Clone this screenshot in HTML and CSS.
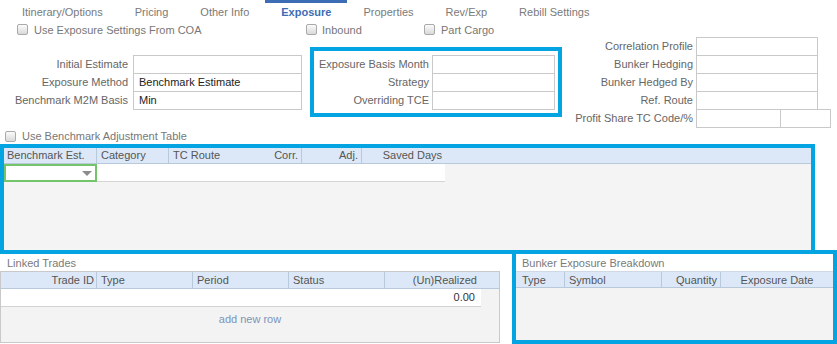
FILE: index.html
```html
<!DOCTYPE html>
<html lang="en">
<head>
    <meta charset="UTF-8">
    <meta name="viewport" content="width=device-width, initial-scale=1.0">
    <title>Exposure</title>
    <link rel="stylesheet" href="styles.css">
</head>
<body>
    <div class="tabs">
        <div class="tab">Itinerary/Options</div>
        <div class="tab">Pricing</div>
        <div class="tab">Other Info</div>
        <div class="tab active">Exposure</div>
        <div class="tab">Properties</div>
        <div class="tab">Rev/Exp</div>
        <div class="tab">Rebill Settings</div>
    </div>

    <div class="check-row top-checks">
        <label class="check w-coa"><span class="box"></span>Use Exposure Settings From COA</label>
        <label class="check w-inbound"><span class="box"></span>Inbound</label>
        <label class="check"><span class="box"></span>Part Cargo</label>
    </div>

    <div class="form-area">
        <div class="left-col">
            <div class="field"><span class="lbl">Initial Estimate</span><span class="inp"></span></div>
            <div class="field"><span class="lbl">Exposure Method</span><span class="inp">Benchmark Estimate</span></div>
            <div class="field"><span class="lbl">Benchmark M2M Basis</span><span class="inp">Min</span></div>
        </div>

        <div class="highlight mid-col">
            <div class="field"><span class="lbl">Exposure Basis Month</span><span class="inp"></span></div>
            <div class="field"><span class="lbl">Strategy</span><span class="inp"></span></div>
            <div class="field"><span class="lbl">Overriding TCE</span><span class="inp"></span></div>
        </div>

        <div class="right-col">
            <div class="field"><span class="lbl">Correlation Profile</span><span class="inp"></span></div>
            <div class="field"><span class="lbl">Bunker Hedging</span><span class="inp"></span></div>
            <div class="field"><span class="lbl">Bunker Hedged By</span><span class="inp"></span></div>
            <div class="field"><span class="lbl">Ref. Route</span><span class="inp"></span></div>
            <div class="field"><span class="lbl">Profit Share TC Code/%</span><span class="inp code"></span><span class="inp pct"></span></div>
        </div>
    </div>

    <div class="check-row adj-check">
        <label class="check"><span class="box"></span>Use Benchmark Adjustment Table</label>
    </div>

    <div class="highlight bench-panel">
        <div class="grid-head">
            <div class="hc c-est">Benchmark Est.</div>
            <div class="hc c-cat">Category</div>
            <div class="hc c-route">TC Route</div>
            <div class="hc c-corr right">Corr.</div>
            <div class="hc c-adj right">Adj.</div>
            <div class="hc c-days right">Saved Days</div>
        </div>
        <div class="bench-row">
            <div class="select-cell"><span class="caret"></span></div>
        </div>
    </div>

    <div class="bottom-area">
        <div class="linked">
            <div class="sec-title">Linked Trades</div>
            <div class="lt-grid">
                <div class="grid-head lt-head">
                    <div class="hc c-lt right">Trade ID</div>
                    <div class="hc c-lt">Type</div>
                    <div class="hc c-lt">Period</div>
                    <div class="hc c-lt">Status</div>
                    <div class="hc c-lt right last">(Un)Realized</div>
                </div>
                <div class="lt-row">0.00</div>
                <div class="add-row">add new row</div>
            </div>
        </div>

        <div class="highlight bunker">
            <div class="sec-title bunker-title">Bunker Exposure Breakdown</div>
            <div class="grid-head bunker-head">
                <div class="hc c-type">Type</div>
                <div class="hc c-sym">Symbol</div>
                <div class="hc c-qty right">Quantity</div>
                <div class="hc c-date">Exposure Date</div>
            </div>
        </div>
    </div>
</body>
</html>
```

FILE: styles.css
```css
* { margin: 0; padding: 0; box-sizing: border-box; }

body {
    font-family: "Liberation Sans", Arial, sans-serif;
    font-size: 11px;
    color: #666;
    background: #fff;
    width: 837px;
    height: 344px;
    overflow: hidden;
}

/* tabs */
.tabs { display: flex; height: 22px; padding-left: 6px; }
.tab {
    padding: 0 16px;
    border-top: 3px solid transparent;
    line-height: 19px;
    color: #7a7a7a;
    white-space: nowrap;
}
.tab.active { border-top-color: #3d6db5; color: #3d6db5; font-weight: bold; }

/* checkboxes */
.check-row { display: flex; align-items: center; }
.top-checks { height: 15px; padding-left: 17px; }
.adj-check { height: 16px; padding-left: 5px; }
.check { display: flex; align-items: center; color: #777; white-space: nowrap; }
.check .box {
    width: 11px;
    height: 11px;
    border: 1px solid #aaa;
    border-radius: 2px;
    background: linear-gradient(#fbfbfb, #d9d9d9);
    margin-right: 6px;
}
.w-coa { width: 289px; }
.w-inbound { width: 118px; }
.w-inbound .box { margin-right: 5px; }

/* form fields */
.form-area { display: flex; align-items: flex-start; height: 91px; }
.field { display: flex; align-items: flex-start; height: 18px; }
.lbl { line-height: 19px; text-align: right; white-space: nowrap; }
.inp {
    height: 19px;
    border: 1px solid #c9c9c9;
    background: #fff;
    padding-left: 5px;
    line-height: 17px;
    color: #222;
}

.left-col { margin-top: 18px; }
.left-col .lbl { width: 133px; padding-right: 5px; }
.left-col .inp { width: 169px; }

.highlight { border: 4px solid #04a3e1; }

.mid-col { margin: 10px 0 0 8px; padding: 4px 3px 4px 0; }
.mid-col .lbl { width: 118px; padding-right: 3px; }
.mid-col .inp { width: 123px; }

.right-col { margin-left: 8px; }
.right-col .lbl { width: 126px; padding-right: 3px; }
.right-col .inp { width: 122px; }
.right-col .inp.code { width: 85px; }
.right-col .inp.pct { width: 51px; margin-left: -1px; }

/* grids */
.grid-head {
    display: flex;
    height: 16px;
    background: #dce8f7;
    border-bottom: 1px solid #b9c9dc;
    line-height: 15px;
    color: #555;
}
.hc { padding: 0 3px; border-right: 1px solid #b9c9dc; white-space: nowrap; }
.hc.right { text-align: right; }

.bench-panel { width: 815px; height: 110px; background: #f4f4f4; }
.c-est { width: 93px; }
.c-cat { width: 72px; padding-left: 4px; }
.c-route { width: 71px; padding-left: 4px; border-right: none; }
.c-corr { width: 62px; }
.c-adj { width: 60px; }
.c-days { width: 83px; border-right: none; }

.bench-row {
    display: flex;
    width: 441px;
    height: 18px;
    background: #fff;
    border-bottom: 1px solid #d5d5d5;
}
.select-cell {
    width: 93px;
    height: 18px;
    border: 2px solid #74c46c;
    display: flex;
    align-items: center;
    justify-content: flex-end;
    padding-right: 3px;
}
.caret {
    border-left: 5px solid transparent;
    border-right: 5px solid transparent;
    border-top: 5px solid #8c8c8c;
}

/* bottom */
.bottom-area { display: flex; align-items: flex-start; }
.sec-title { height: 17px; padding: 2px 0 0 7px; line-height: 15px; color: #7a7a7a; }

.linked { width: 500px; }
.lt-grid { height: 72px; border: 1px solid #c9c9c9; background: #f3f3f3; }
.lt-head { height: 17px; line-height: 16px; }
.c-lt { width: 96px; padding-left: 4px; }
.c-lt.right { padding: 0 2px 0 0; }
.c-lt.last { padding-right: 4px; border-right: none; }
.lt-row {
    width: 480px;
    height: 18px;
    background: #fff;
    border-bottom: 1px solid #d2d2d2;
    text-align: right;
    padding-right: 6px;
    line-height: 17px;
    color: #333;
}
.add-row { height: 24px; line-height: 24px; text-align: center; color: #7d94b8; }

.bunker {
    flex: 1;
    height: 94px;
    margin: -4px 0 0 12px;
    background: #f3f3f3;
}
.bunker-title { background: #fff; padding-left: 6px; }
.bunker-head { height: 17px; line-height: 16px; border-top: 1px solid #cfd9e6; }
.c-type { width: 49px; padding-left: 6px; }
.c-sym { width: 97px; padding-left: 4px; }
.c-qty { width: 59px; }
.c-date { flex: 1; text-align: center; border-right: none; }
```
